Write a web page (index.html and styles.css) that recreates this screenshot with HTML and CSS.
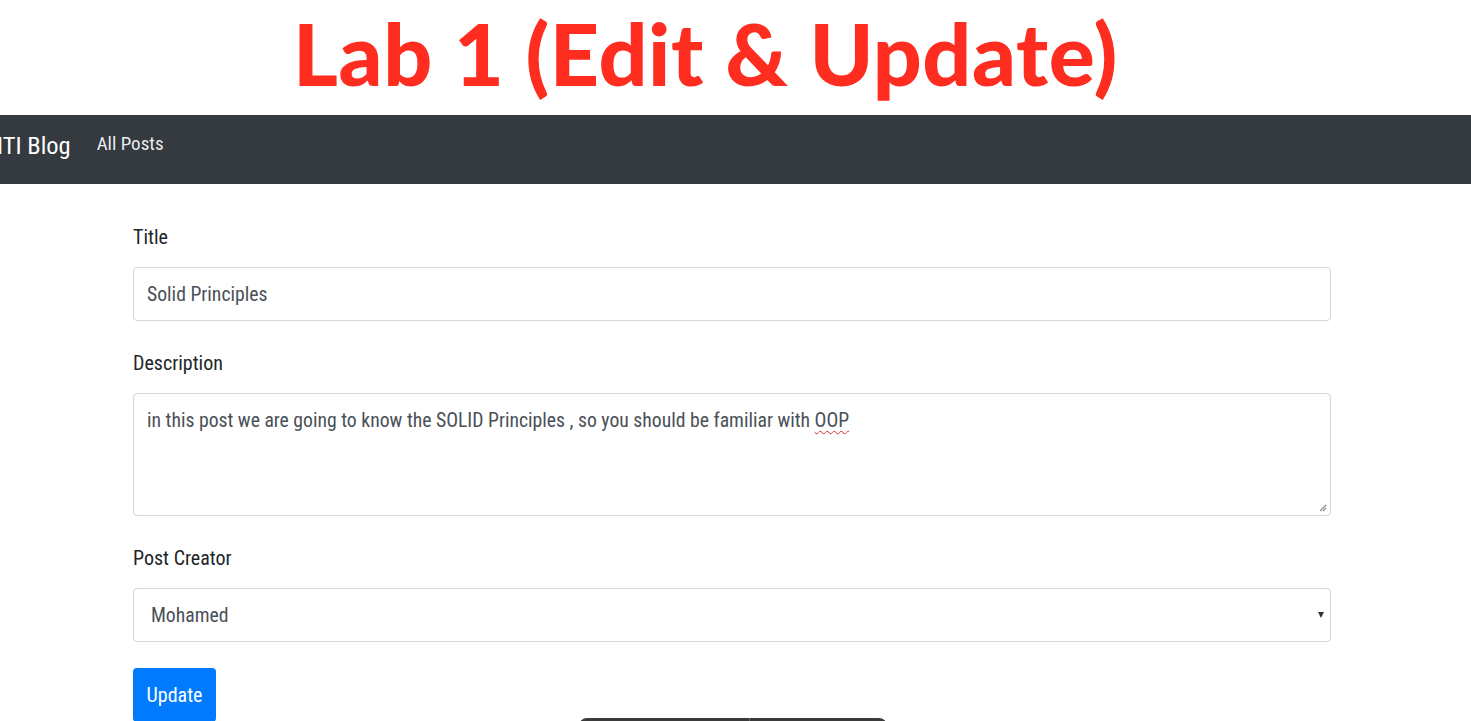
FILE: index.html
```html
<!DOCTYPE html>
<html lang="en">
<head>
<meta charset="utf-8">
<title>Lab 1 (Edit &amp; Update)</title>
<link rel="stylesheet" href="styles.css">
</head>
<body>
<header class="slide-head">
  <h1 class="slide-title">Lab 1 (Edit &amp; Update)</h1>
</header>
<nav class="navbar">
  <span class="brand">ITI Blog</span>
  <a class="nav-link" href="#">All Posts</a>
</nav>
<main class="container">
  <form class="post-form">
    <div class="form-group">
      <label class="form-label">Title</label>
      <div class="form-control">Solid Principles</div>
    </div>
    <div class="form-group">
      <label class="form-label">Description</label>
      <div class="form-control textarea">in this post we are going to know the SOLID Principles , so you should be familiar with <span class="misspelled">OOP</span>
        <svg class="resize" width="8" height="8" viewBox="0 0 8 8"><path d="M7 1 L1 7 M7 4 L4 7" stroke="#888" stroke-width="1.2" fill="none"/></svg>
      </div>
    </div>
    <div class="form-group creator-group">
      <label class="form-label">Post Creator</label>
      <div class="form-control select"><span class="select-value">Mohamed</span><span class="caret"></span></div>
    </div>
    <button class="btn" type="button">Update</button>
  </form>
</main>
<div class="toolbar"><span class="toolbar-divider"></span></div>
</body>
</html>
```
FILE: styles.css
```css
html, body {
  margin: 0;
  padding: 0;
  background: #ffffff;
  overflow: hidden;
  height: 721px;
}
body {
  font-family: "Liberation Sans Narrow", "Roboto Condensed", "Roboto", sans-serif;
  color: #212529;
  position: relative;
}
.slide-head {
  height: 115px;
  display: flex;
  align-items: flex-start;
  justify-content: center;
  padding-right: 60px;
  box-sizing: border-box;
}
.slide-title {
  margin: 0;
  font-family: "Lato", "Open Sans", sans-serif;
  font-weight: 900;
  font-size: 86px;
  color: #ff2d20;
  letter-spacing: 0.6px;
  line-height: 1;
  padding-top: 10px;
}
.navbar {
  height: 69px;
  box-sizing: border-box;
  background: #343a40;
  display: flex;
  align-items: center;
  padding-bottom: 12px;
}
.brand {
  color: #ffffff;
  font-size: 24.5px;
  margin-left: -3px;
  margin-right: 26px;
  padding-top: 3px;
}
.nav-link {
  color: rgba(255,255,255,0.92);
  font-size: 19px;
  text-decoration: none;
}
.container {
  padding: 41px 0 0 133px;
  width: 1198px;
}
.form-group {
  margin-bottom: 30px;
}
.form-label {
  display: block;
  font-size: 20px;
  line-height: 24px;
  margin-bottom: 18px;
  color: #212529;
}
.form-control {
  box-sizing: border-box;
  height: 54px;
  border: 1px solid #d3d6da;
  border-radius: 4px;
  padding: 0 13px;
  display: flex;
  align-items: center;
  font-size: 19.7px;
  color: #495057;
  background: #fff;
}
.textarea {
  display: block;
  height: 123px;
  padding-top: 15px;
  position: relative;
}
.misspelled {
  text-decoration: underline wavy #e0302a;
  text-decoration-thickness: 1px;
  text-underline-offset: 3px;
}
.resize {
  position: absolute;
  right: 3px;
  bottom: 3px;
}
.select {
  justify-content: space-between;
  padding-left: 17px;
  padding-right: 6px;
}
.caret {
  width: 0;
  height: 0;
  border-left: 3px solid transparent;
  border-right: 3px solid transparent;
  border-top: 6px solid #333;
}
.creator-group {
  margin-bottom: 26px;
}
.btn {
  background: #007bff;
  color: #fff;
  border: none;
  border-radius: 4px;
  height: 54px;
  width: 83px;
  font-family: inherit;
  font-size: 20px;
  padding: 0;
}
.toolbar {
  position: absolute;
  left: 579px;
  top: 718px;
  width: 308px;
  height: 20px;
  background: #3a3a3a;
  border-radius: 8px 8px 0 0;
}
.toolbar-divider {
  position: absolute;
  left: 170px;
  top: 0;
  width: 1px;
  height: 20px;
  background: #666;
}
```
